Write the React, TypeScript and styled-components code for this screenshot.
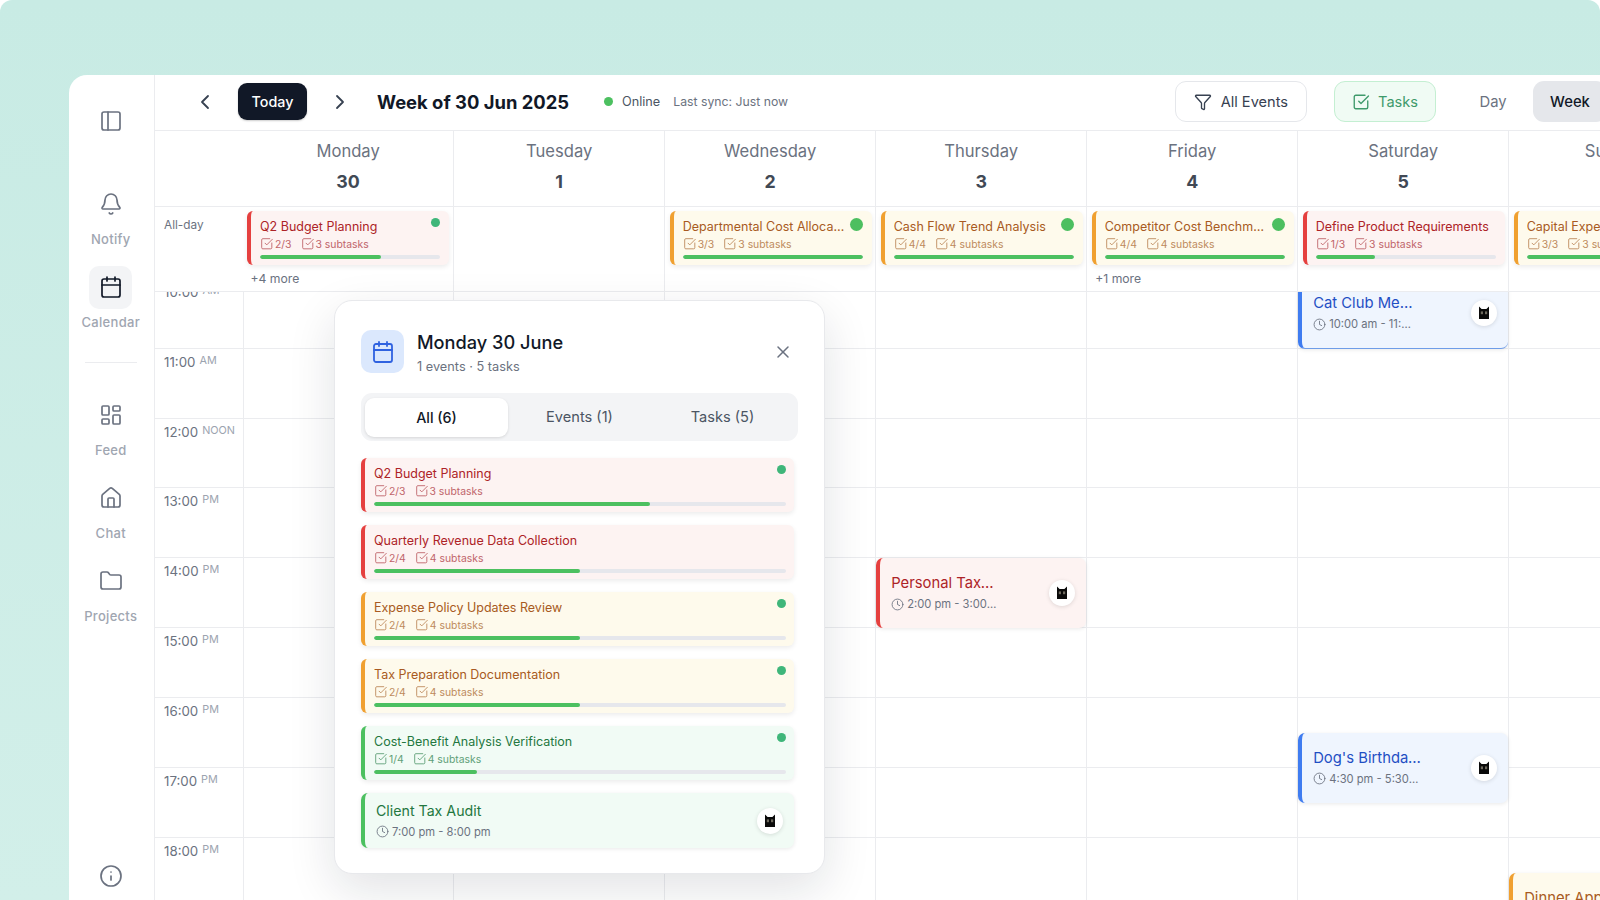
import React from "react"
import styled, { createGlobalStyle } from "styled-components"
import {
  Bell,
  Calendar,
  ChevronLeft,
  ChevronRight,
  Clock,
  Filter,
  Folder,
  House,
  Info,
  LayoutDashboard,
  PanelLeft,
  SquareCheckBig,
  X,
} from "lucide-react"

type Tone = "red" | "amber" | "green" | "blue"

const tones: Record<Tone, { bg: string; bar: string; title: string; sub: string; line: string }> = {
  red: { bg: "#fdf3f2", bar: "#e5403f", title: "#ad2327", sub: "#c0646a", line: "#e5403f" },
  amber: { bg: "#fefaec", bar: "#f0a030", title: "#a85a22", sub: "#bd8a5c", line: "#f0a030" },
  green: { bg: "#f1fbf5", bar: "#4cc060", title: "#23773f", sub: "#5f9f78", line: "#4cc060" },
  blue: { bg: "#eff5fe", bar: "#3f7cf0", title: "#1f4fc4", sub: "#6b7280", line: "#6f9de8" },
}

const GlobalStyle = createGlobalStyle`
  html, body {
    margin: 0;
    padding: 0;
    background: #ffffff;
    overflow: hidden;
  }
  * {
    box-sizing: border-box;
  }
  body {
    font-family: Inter, "Liberation Sans", sans-serif;
    -webkit-font-smoothing: antialiased;
  }
`

const Frame = styled.div`
  width: 1600px;
  height: 900px;
  padding: 75px 0 0 69px;
  overflow: hidden;
  border-radius: 12px 12px 0 0;
  background: linear-gradient(180deg, #c8ebe4 0%, #d2efe9 100%);
`

const Window = styled.div`
  display: flex;
  width: 1651px;
  height: 825px;
  background: #ffffff;
  border-top-left-radius: 18px;
  overflow: hidden;
`

const Sidebar = styled.nav`
  flex: 0 0 86px;
  display: flex;
  flex-direction: column;
  align-items: center;
  padding: 24.5px 1.5px 2.5px 0;
  border-right: 1px solid #ebecef;
`

const IconTile = styled.div<{ $active?: boolean }>`
  width: 43px;
  height: 43px;
  flex: none;
  display: flex;
  align-items: center;
  justify-content: center;
  border-radius: 10px;
  color: ${(p) => (p.$active ? "#111827" : "#6b7280")};
  background: ${(p) => (p.$active ? "#f3f4f6" : "transparent")};
`

const PanelTile = styled(IconTile)`
  margin-bottom: 40px;
`

const NavItem = styled.div`
  display: flex;
  flex-direction: column;
  align-items: center;
  margin-bottom: 18.5px;
`

const NavLabel = styled.span`
  margin-top: 5.5px;
  font-size: 13px;
  line-height: 16px;
  font-weight: 500;
  letter-spacing: 0.3px;
  color: #a0a6b1;
`

const SideDivider = styled.div`
  width: 52px;
  height: 1px;
  margin: 13px 0 31px;
  background: #ebecef;
`

const BottomTile = styled(IconTile)`
  margin-top: auto;
`

const Main = styled.div`
  position: relative;
  flex: 1;
  min-width: 0;
  display: flex;
  flex-direction: column;
`

const TopBar = styled.header`
  flex: 0 0 56px;
  display: flex;
  align-items: center;
  padding: 0 113px 2px 38px;
  border-bottom: 1px solid #ebecef;
`

const Chevron = styled.button`
  width: 24px;
  height: 24px;
  padding: 0;
  border: 0;
  background: none;
  color: #374151;
  display: flex;
  align-items: center;
  justify-content: center;
`

const TodayButton = styled.button`
  width: 69px;
  height: 37px;
  margin: 0 21px;
  padding: 0;
  border: 0;
  border-radius: 9px;
  background: #111827;
  color: #ffffff;
  font: 500 14.3px Inter, sans-serif;
  box-shadow: 0 1px 2px rgba(0, 0, 0, 0.2);
`

const WeekTitle = styled.h1`
  margin: 0 0 0 25px;
  font-size: 18.4px;
  line-height: 24px;
  font-weight: 700;
  color: #111827;
  white-space: nowrap;
`

const StatusDot = styled.span`
  width: 9px;
  height: 9px;
  margin-left: 35px;
  border-radius: 50%;
  background: #4cc060;
`

const OnlineText = styled.span`
  margin-left: 9px;
  font-size: 12.7px;
  color: #4b5563;
`

const SyncText = styled.span`
  margin-left: 13px;
  font-size: 12.25px;
  color: #6b7280;
`

const ToolButton = styled.button<{ $green?: boolean }>`
  height: 41px;
  display: flex;
  align-items: center;
  gap: 9px;
  padding: 0 18px;
  border-radius: 11px;
  border: 1px solid ${(p) => (p.$green ? "#c4efd2" : "#e5e7eb")};
  background: ${(p) => (p.$green ? "#f0fbf4" : "#ffffff")};
  color: ${(p) => (p.$green ? "#3f9a6b" : "#374151")};
  font: 400 14.6px Inter, sans-serif;
`

const FilterButton = styled(ToolButton)`
  margin-left: auto;
`

const TasksButton = styled(ToolButton)`
  margin-left: 27px;
  padding: 0 17px;
  gap: 8px;
`

const ViewButton = styled.button<{ $active?: boolean }>`
  height: 41px;
  width: 74px;
  padding: 0;
  border: 0;
  border-radius: 11px;
  background: ${(p) => (p.$active ? "#e5e7eb" : "transparent")};
  color: ${(p) => (p.$active ? "#111827" : "#6b7280")};
  font: ${(p) => (p.$active ? 500 : 400)} 14.8px Inter, sans-serif;
`

const DayView = styled(ViewButton)`
  width: 72px;
  margin-left: 21px;
  margin-right: 4px;
`

const columns = "88px 210.2px repeat(6, 211px)"

const HeadRow = styled.div`
  flex: 0 0 75.5px;
  display: grid;
  grid-template-columns: ${columns};
  border-bottom: 1px solid #ebecef;
`

const DayHead = styled.div<{ $first?: boolean }>`
  display: flex;
  flex-direction: column;
  align-items: center;
  padding-top: 8px;
  border-left: ${(p) => (p.$first ? "0" : "1px solid #ebecef")};
`

const DayName = styled.span`
  font-size: 16.6px;
  line-height: 24px;
  color: #6b7280;
`

const DayNumber = styled.span`
  margin-top: 6.5px;
  font-size: 17.8px;
  line-height: 24px;
  font-weight: 700;
  color: #414955;
`

const AllDayRow = styled.div`
  flex: 0 0 85.5px;
  display: grid;
  grid-template-columns: ${columns};
  border-bottom: 1px solid #ebecef;
`

const AllDayLabel = styled.div`
  padding: 9px 0 0 9px;
  font-size: 11.8px;
  line-height: 18px;
  color: #6b7280;
`

const AllDayCell = styled.div<{ $first?: boolean }>`
  min-width: 0;
  padding: ${(p) => (p.$first ? "4.5px 4.5px 0 4px" : "4.5px 3.5px 0 4.5px")};
  border-left: ${(p) => (p.$first ? "0" : "1px solid #ebecef")};
`

const MoreLink = styled.div`
  margin: 5.5px 0 0 3.5px;
  font-size: 12.2px;
  line-height: 16px;
  color: #6b7280;
`

const TaskBox = styled.div<{ $tone: Tone }>`
  height: 54px;
  padding: 6.5px 8.5px 0 9px;
  border-left: 4.5px solid ${(p) => tones[p.$tone].bar};
  border-radius: 6px;
  background: ${(p) => tones[p.$tone].bg};
  box-shadow: 0 2px 5px rgba(0, 0, 0, 0.08);
`

const TaskHead = styled.div`
  display: flex;
  align-items: flex-start;
  justify-content: space-between;
  gap: 4px;
  height: 17px;
`

const TaskTitle = styled.div<{ $tone: Tone }>`
  min-width: 0;
  font-size: 12.5px;
  line-height: 17px;
  white-space: nowrap;
  overflow: hidden;
  text-overflow: ellipsis;
  color: ${(p) => tones[p.$tone].title};
`

const SyncDot = styled.span<{ $big?: boolean }>`
  flex: none;
  width: ${(p) => (p.$big ? 13 : 9)}px;
  height: ${(p) => (p.$big ? 13 : 9)}px;
  margin-right: ${(p) => (p.$big ? 0.5 : 0)}px;
  border-radius: 50%;
  background: ${(p) => (p.$big ? "#4cbf60" : "#3fb67a")};
`

const TaskMeta = styled.div<{ $tone: Tone }>`
  display: flex;
  align-items: center;
  height: 15px;
  margin-top: 2px;
  font-size: 10.4px;
  line-height: 15px;
  color: ${(p) => tones[p.$tone].sub};
`

const MetaPart = styled.span`
  display: flex;
  align-items: center;
  gap: 1.5px;
  margin-right: 9px;
`

const Progress = styled.div`
  height: 4.4px;
  margin-top: 3px;
  border-radius: 3px;
  background: #e6e7ec;
  overflow: hidden;
`

const ProgressFill = styled.div`
  height: 100%;
  border-radius: 3px;
  background: #4cc060;
`

const GridViewport = styled.div`
  flex: 1;
  min-height: 0;
  overflow: hidden;
`

const GridBody = styled.div`
  margin-top: -14.2px;
`

const HourRow = styled.div`
  display: grid;
  grid-template-columns: ${columns};
  height: 69.85px;
`

const HourLabel = styled.div`
  padding: 4px 0 0 9px;
  border-top: 1px solid #ebecef;
  font-size: 13.3px;
  line-height: 18px;
  color: #6b7280;
  white-space: nowrap;
`

const HourTag = styled.sup`
  margin-left: 4px;
  font-size: 10.8px;
  line-height: 0;
  vertical-align: 3px;
  color: #9ca3af;
`

const HourCell = styled.div`
  position: relative;
  border-top: 1px solid #ebecef;
  border-left: 1px solid #ebecef;
`

const EventBox = styled.div<{ $tone: Tone; $height: number; $underline?: boolean }>`
  height: ${(p) => p.$height}px;
  display: flex;
  align-items: center;
  justify-content: space-between;
  padding: 0 11px 0 11px;
  border-left: 4.5px solid ${(p) => tones[p.$tone].bar};
  border-bottom: ${(p) => (p.$underline ? `1.5px solid ${tones[p.$tone].line}` : "0")};
  border-radius: 7px;
  background: ${(p) => tones[p.$tone].bg};
  box-shadow: 0 1px 4px rgba(0, 0, 0, 0.09);
`

const GridEvent = styled(EventBox)<{ $offset: number }>`
  position: absolute;
  top: ${(p) => p.$offset}px;
  left: 0;
  right: 0;
  z-index: 1;
`

const EventText = styled.div<{ $wide?: boolean }>`
  ${(p) => (p.$wide ? "flex: 1;" : "width: 108.3px;")}
  min-width: 0;
`

const EventTitle = styled.div<{ $tone: Tone; $wide?: boolean }>`
  font-size: ${(p) => (p.$wide ? 14.2 : 14.8)}px;
  line-height: 20px;
  white-space: nowrap;
  overflow: hidden;
  text-overflow: ellipsis;
  color: ${(p) => tones[p.$tone].title};
`

const EventTime = styled.div`
  display: flex;
  align-items: center;
  gap: 3px;
  margin-top: 2px;
  font-size: 11.2px;
  line-height: 18px;
  color: #6b7280;
`

const TimeText = styled.span`
  min-width: 0;
  white-space: nowrap;
  overflow: hidden;
  text-overflow: ellipsis;
`

const Avatar = styled.div`
  flex: none;
  width: 26px;
  height: 26px;
  display: flex;
  align-items: center;
  justify-content: center;
  border-radius: 50%;
  background: #ffffff;
  box-shadow: 0 1px 4px rgba(0, 0, 0, 0.12);
`

const Popup = styled.section`
  position: absolute;
  top: 225px;
  left: 179px;
  z-index: 5;
  width: 491px;
  height: 574px;
  padding: 29px 26px 0;
  border: 1px solid #e8e9ec;
  border-radius: 18px;
  background: #ffffff;
  box-shadow: 0 16px 48px rgba(17, 24, 39, 0.12);
`

const PopupHead = styled.div`
  display: flex;
  align-items: flex-start;
  gap: 13px;
  height: 43px;
`

const PopupIcon = styled.div`
  width: 43px;
  height: 43px;
  flex: none;
  display: flex;
  align-items: center;
  justify-content: center;
  border-radius: 10px;
  background: #dbe8fd;
  color: #2f62e0;
`

const PopupHeadText = styled.div`
  flex: 1;
`

const PopupTitle = styled.h2`
  margin: 0;
  font-size: 18.2px;
  line-height: 24px;
  font-weight: 500;
  color: #111827;
`

const PopupSub = styled.div`
  margin-top: 4px;
  font-size: 12.75px;
  line-height: 18px;
  color: #6b7280;
`

const CloseButton = styled.button`
  align-self: center;
  width: 30px;
  height: 30px;
  padding: 0;
  border: 0;
  background: none;
  color: #6b7280;
  display: flex;
  align-items: center;
  justify-content: center;
`

const Tabs = styled.div`
  display: flex;
  height: 48px;
  margin-top: 20px;
  padding: 4.5px 4px;
  border-radius: 11px;
  background: #f3f4f6;
`

const Tab = styled.button<{ $active?: boolean }>`
  flex: 1;
  padding: 0;
  border: 0;
  border-radius: 9px;
  background: ${(p) => (p.$active ? "#ffffff" : "transparent")};
  box-shadow: ${(p) => (p.$active ? "0 1px 3px rgba(0, 0, 0, 0.12)" : "none")};
  color: ${(p) => (p.$active ? "#111827" : "#4b5563")};
  font: ${(p) => (p.$active ? "500 14.3px" : "400 14.6px")} Inter, sans-serif;
`

const PopupList = styled.div`
  display: flex;
  flex-direction: column;
  gap: 13px;
  margin-top: 17px;
  padding-right: 4px;
`

type Task = {
  title: string
  tone: Tone
  done: string
  subtasks: number
  pct: number
  dot?: "small" | "big"
}

const TaskCard = ({ task }: { task: Task }) => (
  <TaskBox $tone={task.tone}>
    <TaskHead>
      <TaskTitle $tone={task.tone}>{task.title}</TaskTitle>
      {task.dot && <SyncDot $big={task.dot === "big"} />}
    </TaskHead>
    <TaskMeta $tone={task.tone}>
      <MetaPart>
        <SquareCheckBig size={13.5} strokeWidth={1.6} />
        {task.done}
      </MetaPart>
      <MetaPart>
        <SquareCheckBig size={13.5} strokeWidth={1.6} />
        {task.subtasks} subtasks
      </MetaPart>
    </TaskMeta>
    <Progress>
      <ProgressFill style={{ width: `${task.pct}%` }} />
    </Progress>
  </TaskBox>
)

const CatIcon = () => (
  <svg width="12" height="14" viewBox="0 0 12 14">
    <path d="M1 .5 3.6 3h4.8L11 .5V13H1z" fill="#0a0a0a" />
    <rect x="2.8" y="5.4" width="2.2" height="2.8" fill="#6e6a5e" />
    <rect x="7" y="5.4" width="2.2" height="2.8" fill="#6e6a5e" />
  </svg>
)

const EventInner = ({ title, time, tone, wide }: { title: string; time: string; tone: Tone; wide?: boolean }) => (
  <>
    <EventText $wide={wide}>
      <EventTitle $tone={tone} $wide={wide}>{title}</EventTitle>
      <EventTime>
        <Clock size={13} strokeWidth={1.6} style={{ flex: "none" }} />
        <TimeText>{time}</TimeText>
      </EventTime>
    </EventText>
    <Avatar>
      <CatIcon />
    </Avatar>
  </>
)

const navItems = [
  { label: "Notify", icon: Bell },
  { label: "Calendar", icon: Calendar, active: true },
]

const navItems2 = [
  { label: "Feed", icon: LayoutDashboard },
  { label: "Chat", icon: House },
  { label: "Projects", icon: Folder },
]

const days = [
  ["Monday", "30"],
  ["Tuesday", "1"],
  ["Wednesday", "2"],
  ["Thursday", "3"],
  ["Friday", "4"],
  ["Saturday", "5"],
  ["Sunday", "6"],
]

const allDay: { task?: Task; more?: string }[] = [
  { task: { title: "Q2 Budget Planning", tone: "red", done: "2/3", subtasks: 3, pct: 67, dot: "small" }, more: "+4 more" },
  {},
  { task: { title: "Departmental Cost Allocation Review", tone: "amber", done: "3/3", subtasks: 3, pct: 100, dot: "big" } },
  { task: { title: "Cash Flow Trend Analysis", tone: "amber", done: "4/4", subtasks: 4, pct: 100, dot: "big" } },
  { task: { title: "Competitor Cost Benchmarking", tone: "amber", done: "4/4", subtasks: 4, pct: 100, dot: "big" }, more: "+1 more" },
  { task: { title: "Define Product Requirements", tone: "red", done: "1/3", subtasks: 3, pct: 33 } },
  { task: { title: "Capital Expenditure Review", tone: "amber", done: "3/3", subtasks: 3, pct: 100 } },
]

const hours = [
  ["10:00", "AM"],
  ["11:00", "AM"],
  ["12:00", "NOON"],
  ["13:00", "PM"],
  ["14:00", "PM"],
  ["15:00", "PM"],
  ["16:00", "PM"],
  ["17:00", "PM"],
  ["18:00", "PM"],
]

const gridEvents: { hour: number; day: number; offset: number; title: string; time: string; tone: Tone; underline?: boolean }[] = [
  { hour: 0, day: 5, offset: 0, title: "Cat Club Me…", time: "10:00 am - 11:…", tone: "blue", underline: true },
  { hour: 4, day: 3, offset: 0, title: "Personal Taxes Due", time: "2:00 pm - 3:00 pm", tone: "red" },
  { hour: 6, day: 5, offset: 35, title: "Dog's Birthday Party", time: "4:30 pm - 5:30 pm", tone: "blue" },
  { hour: 8, day: 6, offset: 35, title: "Dinner Appointment", time: "6:30 pm - 7:30 pm", tone: "amber" },
]

const popupTasks: Task[] = [
  { title: "Q2 Budget Planning", tone: "red", done: "2/3", subtasks: 3, pct: 67, dot: "small" },
  { title: "Quarterly Revenue Data Collection", tone: "red", done: "2/4", subtasks: 4, pct: 50 },
  { title: "Expense Policy Updates Review", tone: "amber", done: "2/4", subtasks: 4, pct: 50, dot: "small" },
  { title: "Tax Preparation Documentation", tone: "amber", done: "2/4", subtasks: 4, pct: 50, dot: "small" },
  { title: "Cost-Benefit Analysis Verification", tone: "green", done: "1/4", subtasks: 4, pct: 25, dot: "small" },
]

const App = () => {
  return (
    <Frame>
      <GlobalStyle />
      <Window>
        <Sidebar>
          <PanelTile>
            <PanelLeft size={24} strokeWidth={1.7} />
          </PanelTile>
          {navItems.map((n) => (
            <NavItem key={n.label}>
              <IconTile $active={n.active}>
                <n.icon size={24} strokeWidth={1.7} />
              </IconTile>
              <NavLabel>{n.label}</NavLabel>
            </NavItem>
          ))}
          <SideDivider />
          {navItems2.map((n) => (
            <NavItem key={n.label}>
              <IconTile>
                <n.icon size={24} strokeWidth={1.7} />
              </IconTile>
              <NavLabel>{n.label}</NavLabel>
            </NavItem>
          ))}
          <BottomTile>
            <Info size={24} strokeWidth={1.7} />
          </BottomTile>
        </Sidebar>
        <Main>
          <TopBar>
            <Chevron>
              <ChevronLeft size={24} strokeWidth={1.8} />
            </Chevron>
            <TodayButton>Today</TodayButton>
            <Chevron>
              <ChevronRight size={24} strokeWidth={1.8} />
            </Chevron>
            <WeekTitle>Week of 30 Jun 2025</WeekTitle>
            <StatusDot />
            <OnlineText>Online</OnlineText>
            <SyncText>Last sync: Just now</SyncText>
            <FilterButton>
              <Filter size={18} strokeWidth={1.8} />
              All Events
            </FilterButton>
            <TasksButton $green>
              <SquareCheckBig size={18} strokeWidth={1.8} />
              Tasks
            </TasksButton>
            <DayView>Day</DayView>
            <ViewButton $active>Week</ViewButton>
          </TopBar>
          <HeadRow>
            <div />
            {days.map(([name, num], i) => (
              <DayHead key={name} $first={i === 0}>
                <DayName>{name}</DayName>
                <DayNumber>{num}</DayNumber>
              </DayHead>
            ))}
          </HeadRow>
          <AllDayRow>
            <AllDayLabel>All-day</AllDayLabel>
            {allDay.map((c, i) => (
              <AllDayCell key={i} $first={i === 0}>
                {c.task && <TaskCard task={c.task} />}
                {c.more && <MoreLink>{c.more}</MoreLink>}
              </AllDayCell>
            ))}
          </AllDayRow>
          <GridViewport>
            <GridBody>
              {hours.map(([time, tag], h) => (
                <HourRow key={time}>
                  <HourLabel>
                    {time}
                    <HourTag>{tag}</HourTag>
                  </HourLabel>
                  {days.map(([name], d) => (
                    <HourCell key={name}>
                      {gridEvents
                        .filter((e) => e.hour === h && e.day === d)
                        .map((e) => (
                          <GridEvent key={e.title} $tone={e.tone} $height={70} $offset={e.offset} $underline={e.underline}>
                            <EventInner title={e.title} time={e.time} tone={e.tone} />
                          </GridEvent>
                        ))}
                    </HourCell>
                  ))}
                </HourRow>
              ))}
            </GridBody>
          </GridViewport>
          <Popup>
            <PopupHead>
              <PopupIcon>
                <Calendar size={24} strokeWidth={1.8} />
              </PopupIcon>
              <PopupHeadText>
                <PopupTitle>Monday 30 June</PopupTitle>
                <PopupSub>1 events · 5 tasks</PopupSub>
              </PopupHeadText>
              <CloseButton>
                <X size={20} strokeWidth={1.8} />
              </CloseButton>
            </PopupHead>
            <Tabs>
              <Tab $active>All (6)</Tab>
              <Tab>Events (1)</Tab>
              <Tab>Tasks (5)</Tab>
            </Tabs>
            <PopupList>
              {popupTasks.map((t) => (
                <TaskCard key={t.title} task={t} />
              ))}
              <EventBox $tone="green" $height={55}>
                <EventInner title="Client Tax Audit" time="7:00 pm - 8:00 pm" tone="green" wide />
              </EventBox>
            </PopupList>
          </Popup>
        </Main>
      </Window>
    </Frame>
  )
}

export default App
